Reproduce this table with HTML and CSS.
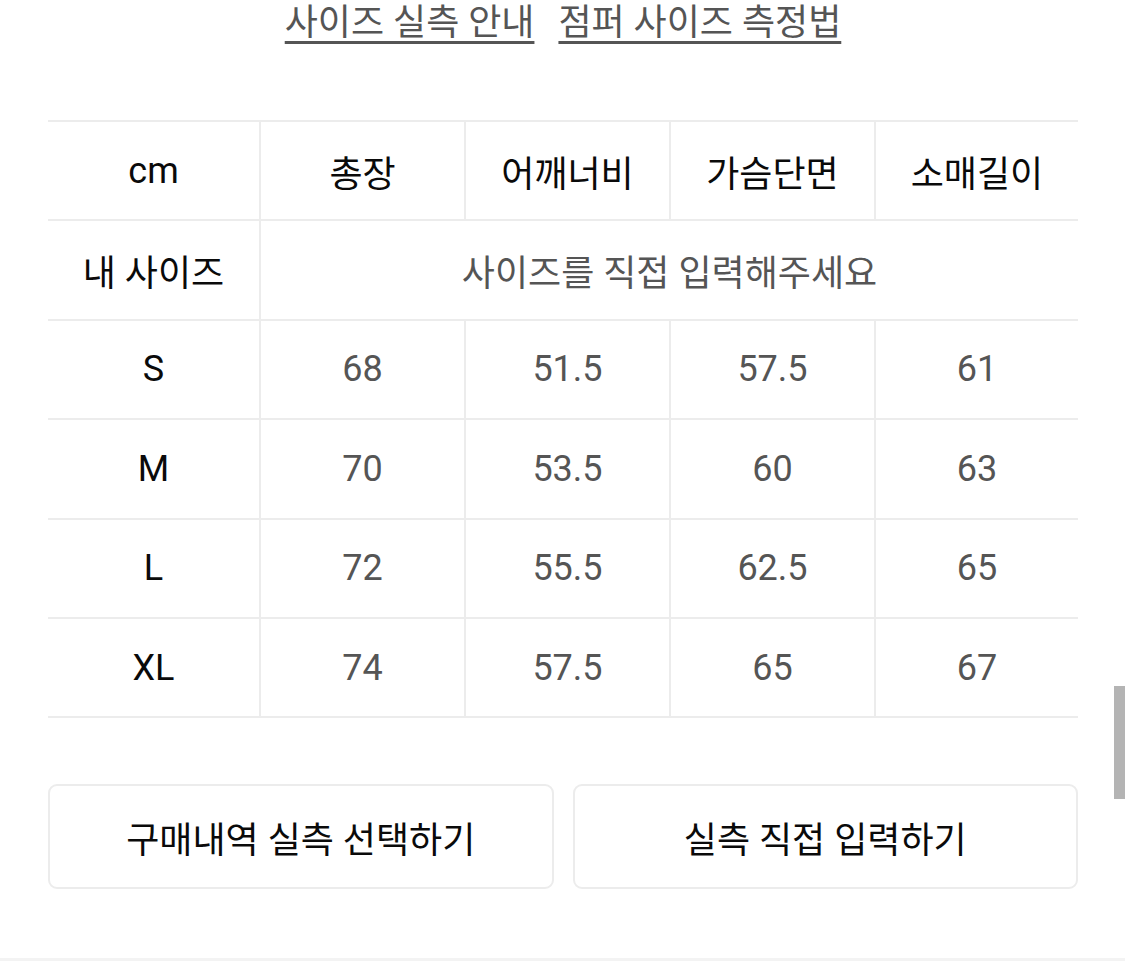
FILE: index.html
```html
<!DOCTYPE html>
<html lang="ko">
<head>
<meta charset="utf-8">
<link rel="stylesheet" href="styles.css">
</head>
<body>
<div class="page">
  <nav class="links">
    <a class="link" href="#">사이즈 실측 안내</a>
    <a class="link" href="#">점퍼 사이즈 측정법</a>
  </nav>
  <table class="size-table">
    <colgroup>
      <col class="c-first"><col class="c-data"><col class="c-data"><col class="c-data"><col class="c-last">
    </colgroup>
    <thead>
      <tr class="head-row">
        <th>cm</th><th>총장</th><th>어깨너비</th><th>가슴단면</th><th>소매길이</th>
      </tr>
    </thead>
    <tbody>
      <tr>
        <th>내 사이즈</th>
        <td colspan="4" class="placeholder">사이즈를 직접 입력해주세요</td>
      </tr>
      <tr><th>S</th><td>68</td><td>51.5</td><td>57.5</td><td>61</td></tr>
      <tr><th>M</th><td>70</td><td>53.5</td><td>60</td><td>63</td></tr>
      <tr><th>L</th><td>72</td><td>55.5</td><td>62.5</td><td>65</td></tr>
      <tr><th>XL</th><td>74</td><td>57.5</td><td>65</td><td>67</td></tr>
    </tbody>
  </table>
  <div class="actions">
    <button class="btn" type="button">구매내역 실측 선택하기</button>
    <button class="btn" type="button">실측 직접 입력하기</button>
  </div>
</div>
<div class="bottom-line"></div>
<div class="scroll-thumb"></div>
</body>
</html>
```

FILE: styles.css
```css
html, body {
  margin: 0;
  padding: 0;
  background: #ffffff;
}
body {
  font-family: Roboto, "Noto Sans CJK KR", sans-serif;
  color: #111111;
  width: 1125px;
  height: 961px;
  overflow: hidden;
  position: relative;
}
.page {
  padding: 0 47px 0 48px;
}
.links {
  display: flex;
  justify-content: center;
  gap: 24px;
  height: 120px;
  align-items: flex-start;
}
.link {
  font-size: 36px;
  line-height: 46px;
  color: #555555;
  text-decoration: underline;
  text-decoration-thickness: 3px;
  text-underline-offset: 6px;
  text-decoration-color: #555555;
}
.size-table {
  width: 1030px;
  border-collapse: collapse;
  table-layout: fixed;
}
.c-first { width: 212px; }
.c-data { width: 205px; }
.c-last { width: 203px; }
.size-table th,
.size-table td {
  height: 97.4px;
  padding: 0;
  text-align: center;
  vertical-align: middle;
  border: 2px solid #ececec;
  font-size: 36px;
}
.size-table tr > :first-child { border-left: none; }
.size-table tr > :last-child { border-right: none; }
.size-table th {
  font-weight: 400;
  color: #0a0a0a;
}
.size-table td {
  font-weight: 400;
  color: #555555;
}
.actions {
  display: flex;
  gap: 19px;
  margin-top: 66px;
}
.btn {
  flex: 1;
  height: 105px;
  background: #ffffff;
  border: 2px solid #ececec;
  border-radius: 9px;
  font-family: Roboto, "Noto Sans CJK KR", sans-serif;
  font-size: 36px;
  font-weight: 400;
  color: #0a0a0a;
  padding: 0;
}
.bottom-line {
  position: absolute;
  left: 0;
  right: 0;
  bottom: 0;
  height: 3px;
  background: #f3f3f3;
}
.scroll-thumb {
  position: absolute;
  right: 0;
  top: 686px;
  width: 11px;
  height: 113px;
  background: #b4b4b4;
}
```
